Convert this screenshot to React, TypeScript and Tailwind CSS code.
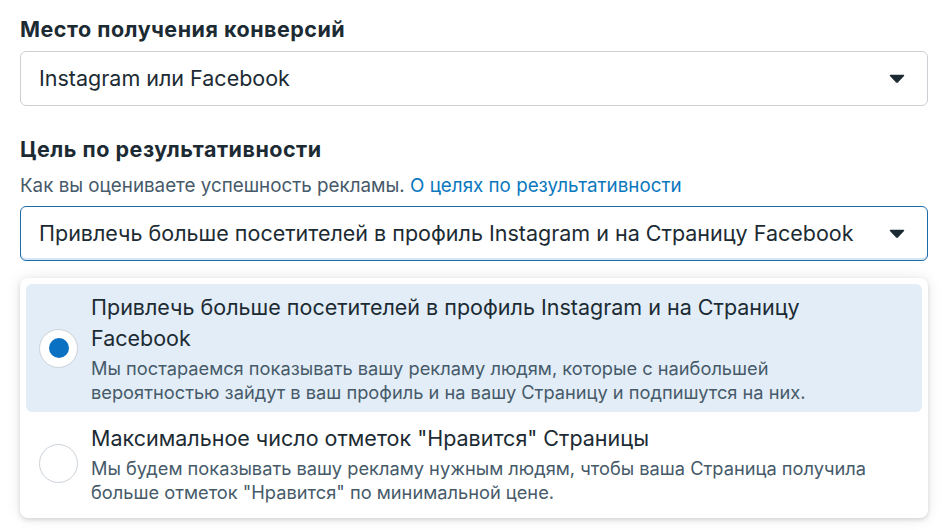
import React from "react";

const Caret = () => (
  <svg width="16" height="10" viewBox="0 0 16 10" className="shrink-0">
    <path d="M1.5 1.5 L14.5 1.5 L8.8 7.6 Q8 8.4 7.2 7.6 Z" fill="#1c2b33" stroke="#1c2b33" strokeWidth="1.5" strokeLinejoin="round" />
  </svg>
);

function Option({
  selected,
  title,
  desc,
}: {
  selected: boolean;
  title: string;
  desc: string;
}) {
  return (
    <div
      className={`flex items-center gap-[13px] rounded-[6px] pl-[13px] pr-[36px] ${
        selected ? "bg-[#e2edf7] pt-[8px] pb-[8px]" : "pt-[11px] pb-[7px]"
      }`}
    >
      <div className="flex h-[39px] w-[39px] shrink-0 items-center justify-center rounded-full border border-[#cbd2d9] bg-white">
        {selected && <div className="h-[20px] w-[20px] rounded-full bg-[#0a70c2]" />}
      </div>
      <div className="flex flex-col gap-[2px]">
        <div className="text-[21.5px] leading-[31px] text-[#1c2b33]">{title}</div>
        <div className="text-[18.25px] leading-[24px] text-[#465a69]">{desc}</div>
      </div>
    </div>
  );
}

export default function App() {
  return (
    <div
      className="min-h-[530px] w-[944px] bg-white pl-[20px] pr-[16px] pt-[14px]"
      style={{ fontFamily: "Inter, 'Noto Sans', sans-serif" }}
    >
      <div className="text-[21.5px] font-bold leading-[30px] tracking-[0.5px] text-[#1c2b33]">Место получения конверсий</div>
      <div className="mt-[7px] flex h-[55px] items-center justify-between rounded-[6px] border border-[#ccd0d5] pl-[18px] pr-[22px]">
        <span className="text-[21.5px] text-[#1c2b33]">Instagram или Facebook</span>
        <Caret />
      </div>

      <div className="mt-[28px] text-[21.5px] font-bold leading-[30px] tracking-[0.5px] text-[#1c2b33]">Цель по результативности</div>
      <div className="mt-[10px] text-[18.8px] leading-[24px] text-[#465a69]">
        Как вы оцениваете успешность рекламы.{" "}
        <span className="text-[#0a78be]">О целях по результативности</span>
      </div>
      <div className="mt-[8px] flex h-[55px] items-center justify-between rounded-[6px] border border-[#1b6ca8] pl-[18px] pr-[22px] shadow-[inset_0_-2px_0_#d6e6f4]">
        <span className="whitespace-nowrap text-[21.5px] text-[#1c2b33]">
          Привлечь больше посетителей в профиль Instagram и на Страницу Facebook
        </span>
        <Caret />
      </div>

      <div className="mt-[17px] flex flex-col rounded-[8px] bg-white p-[6px] pb-[7px] shadow-[0_0_14px_rgba(0,0,0,0.10),0_2px_4px_rgba(0,0,0,0.12)]">
        <Option
          selected
          title="Привлечь больше посетителей в профиль Instagram и на Страницу Facebook"
          desc="Мы постараемся показывать вашу рекламу людям, которые с наибольшей вероятностью зайдут в ваш профиль и на вашу Страницу и подпишутся на них."
        />
        <Option
          selected={false}
          title={'Максимальное число отметок "Нравится" Страницы'}
          desc={'Мы будем показывать вашу рекламу нужным людям, чтобы ваша Страница получила больше отметок "Нравится" по минимальной цене.'}
        />
      </div>
    </div>
  );
}
